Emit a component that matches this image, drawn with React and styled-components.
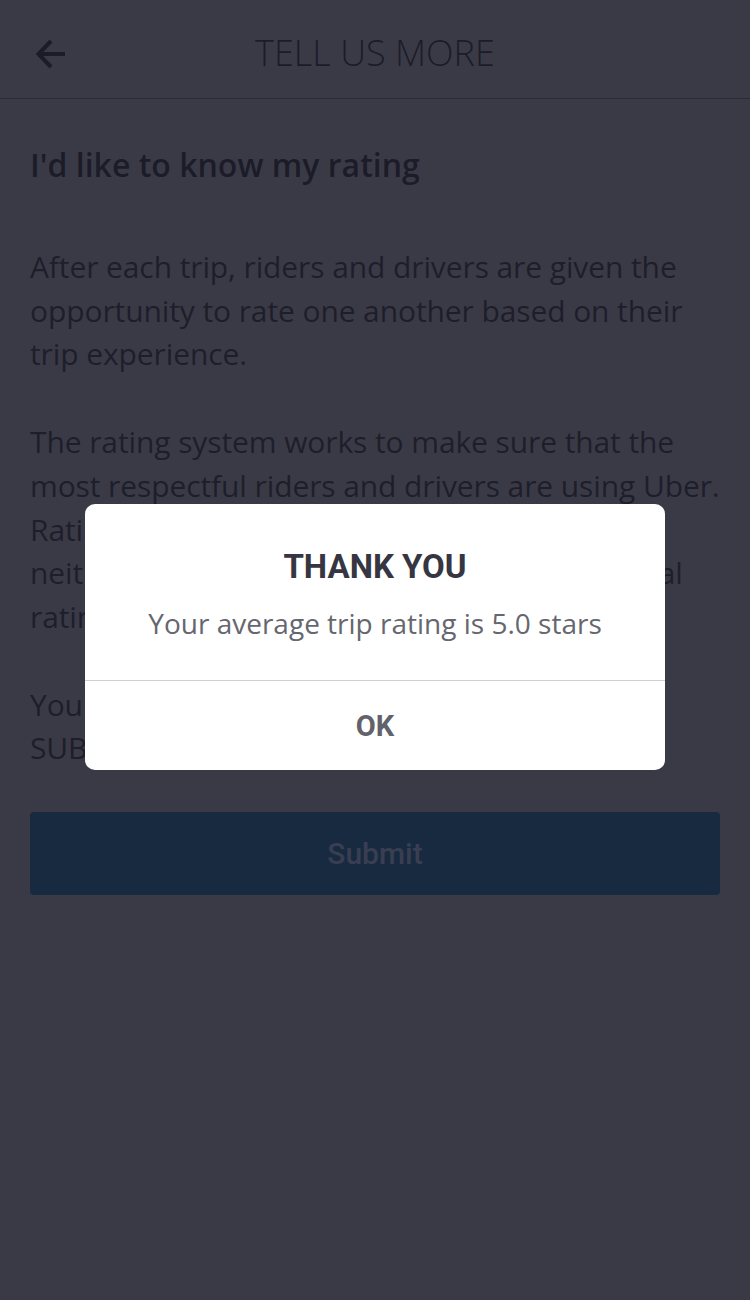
import styled, { createGlobalStyle } from 'styled-components';

const GlobalStyle = createGlobalStyle`
  html, body {
    margin: 0;
    padding: 0;
    background: #3a3a47;
  }
  * { box-sizing: border-box; }
`;

export default function App() {
    return (
        <>
            <GlobalStyle />
            <Page>
                <Header>
                    <BackButton>
                        <svg width="32" height="32" viewBox="0 0 32 32" fill="none">
                            <path d="M30 16H4M16 3L3.5 16L16 29" stroke="#1c1c28" strokeWidth="4" strokeLinejoin="miter" />
                        </svg>
                    </BackButton>
                    <Title>TELL US MORE</Title>
                </Header>

                <Content>
                    <Question>I'd like to know my rating</Question>
                    <Paragraph>
                        After each trip, riders and drivers are given the<br />
                        opportunity to rate one another based on their<br />
                        trip experience.
                    </Paragraph>
                    <Paragraph>
                        The rating system works to make sure that the<br />
                        most respectful riders and drivers are using Uber.<br />
                        Ratings are anonymous and confidential, so<br />
                        neither riders nor drivers will see the individual<br />
                        rating.
                    </Paragraph>
                    <Paragraph>
                        You can see your average rating by tapping<br />
                        SUBMIT below.
                    </Paragraph>
                    <SubmitButton>Submit</SubmitButton>
                </Content>

                <Dialog>
                    <DialogBody>
                        <DialogTitle>THANK YOU</DialogTitle>
                        <DialogText>Your average trip rating is 5.0 stars</DialogText>
                    </DialogBody>
                    <DialogAction>OK</DialogAction>
                </Dialog>
            </Page>
        </>
    );
}

const Page = styled.div`
position: relative;
width: 750px;
min-height: 1300px;
background: #3a3a47;
font-family: "Open Sans", Roboto, sans-serif;
color: #1e1e2a;
`;

const Header = styled.header`
position: relative;
display: flex;
align-items: center;
justify-content: center;
height: 99px;
padding-top: 6px;
border-bottom: 1px solid #2b2b37;
`;

const BackButton = styled.div`
position: absolute;
left: 35px;
top: 38px;
display: flex;
`;

const Title = styled.h1`
margin: 0;
font-size: 36px;
font-weight: 300;
color: #1c1c28;
`;

const Content = styled.main`
display: flex;
flex-direction: column;
padding: 42px 30px 0;
`;

const Question = styled.h2`
margin: 0 0 56px;
font-size: 32px;
font-weight: 600;
line-height: 48px;
color: #1c1c28;
`;

const Paragraph = styled.p`
margin: 0 0 44px;
font-size: 30px;
letter-spacing: -0.1px;
line-height: 43.7px;
white-space: nowrap;
color: #1e1e2a;
`;

const SubmitButton = styled.div`
display: flex;
align-items: center;
justify-content: center;
height: 83px;
margin-top: -2px;
background: #172a40;
border-radius: 4px;
font-family: Roboto, sans-serif;
font-size: 30px;
font-weight: 500;
color: #3a3e52;
`;

const Dialog = styled.div`
position: absolute;
top: 504px;
left: 85px;
width: 580px;
height: 266px;
display: flex;
flex-direction: column;
background: #ffffff;
border-radius: 10px;
overflow: hidden;
`;

const DialogBody = styled.div`
display: flex;
flex-direction: column;
align-items: center;
flex: 1;
padding-top: 43px;
border-bottom: 1px solid #cfcfd4;
`;

const DialogTitle = styled.div`
font-family: Roboto, sans-serif;
font-size: 33px;
font-weight: 700;
color: #363642;
line-height: 40px;
`;

const DialogText = styled.div`
margin-top: 18px;
font-size: 28px;
color: #66666f;
line-height: 36px;
`;

const DialogAction = styled.div`
display: flex;
align-items: center;
justify-content: center;
height: 89px;
font-family: Roboto, sans-serif;
font-size: 29px;
font-weight: 700;
color: #62626b;
`;
